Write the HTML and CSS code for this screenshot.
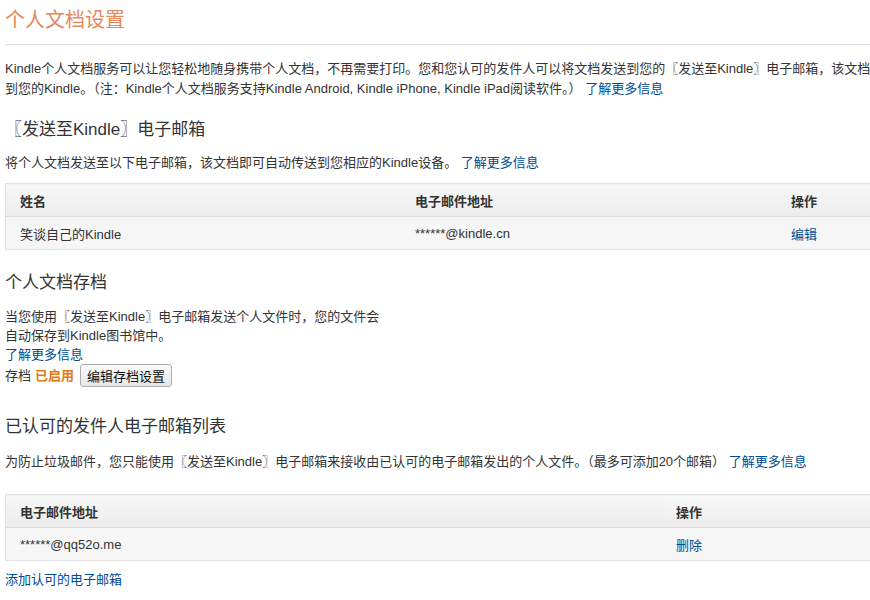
FILE: index.html
```html
<!DOCTYPE html>
<html lang="zh-CN">
<head>
    <meta charset="UTF-8">
    <title>个人文档设置</title>
    <link rel="stylesheet" href="styles.css">
</head>
<body>
    <div class="page">
        <!-- 标题 -->
        <h1 class="page-title">个人文档设置</h1>
        <hr class="divider">

        <p class="intro">
            Kindle个人文档服务可以让您轻松地随身携带个人文档，不再需要打印。您和您认可的发件人可以将文档发送到您的〖发送至Kindle〗电子邮箱，该文档会被发送<br>
            到您的Kindle。（注：Kindle个人文档服务支持Kindle Android, Kindle iPhone, Kindle iPad阅读软件。） <a href="#">了解更多信息</a>
        </p>

        <!-- 发送至Kindle 电子邮箱 -->
        <h2 class="section-title">〖发送至Kindle〗电子邮箱</h2>
        <p class="desc">将个人文档发送至以下电子邮箱，该文档即可自动传送到您相应的Kindle设备。 <a href="#">了解更多信息</a></p>

        <table class="data-table">
            <thead>
                <tr>
                    <th class="col-name">姓名</th>
                    <th class="col-mail">电子邮件地址</th>
                    <th>操作</th>
                </tr>
            </thead>
            <tbody>
                <tr>
                    <td>笑谈自己的Kindle</td>
                    <td>******@kindle.cn</td>
                    <td><a href="#">编辑</a></td>
                </tr>
            </tbody>
        </table>

        <!-- 个人文档存档 -->
        <h2 class="section-title archive-title">个人文档存档</h2>
        <div class="archive">
            <p>当您使用〖发送至Kindle〗电子邮箱发送个人文件时，您的文件会<br>自动保存到Kindle图书馆中。</p>
            <a href="#">了解更多信息</a>
            <div class="archive-status">
                存档 <strong class="enabled">已启用</strong>
                <button class="btn">编辑存档设置</button>
            </div>
        </div>

        <!-- 已认可的发件人 -->
        <h2 class="section-title approved-title">已认可的发件人电子邮箱列表</h2>
        <p class="desc approved-desc">为防止垃圾邮件，您只能使用〖发送至Kindle〗电子邮箱来接收由已认可的电子邮箱发出的个人文件。（最多可添加20个邮箱） <a href="#">了解更多信息</a></p>

        <table class="data-table approved-table">
            <thead>
                <tr>
                    <th class="col-approved">电子邮件地址</th>
                    <th>操作</th>
                </tr>
            </thead>
            <tbody>
                <tr>
                    <td>******@qq52o.me</td>
                    <td><a href="#">删除</a></td>
                </tr>
            </tbody>
        </table>

        <a href="#" class="add-link">添加认可的电子邮箱</a>
    </div>
</body>
</html>
```

FILE: styles.css
```css
body {
    margin: 0;
    padding: 0;
    background: #ffffff;
    color: #333333;
    font-family: 'Liberation Sans', 'Noto Sans CJK SC', sans-serif;
    font-size: 13px;
    overflow: hidden;
}

a {
    color: #004b91;
    text-decoration: none;
}

.page {
    width: 1000px;
    padding: 0 5px;
}

.page-title {
    margin: 0;
    padding-top: 6px;
    font-size: 20px;
    font-weight: normal;
    line-height: 28px;
    color: #e2885c;
}

.divider {
    margin: 10px 0 0;
    border: none;
    border-top: 1px solid #dddddd;
}

.intro {
    margin: 14px 0 0;
    line-height: 20px;
}

.section-title {
    margin: 19px 0 0;
    font-size: 17px;
    font-weight: normal;
    line-height: 24px;
    color: #333333;
}

.desc {
    margin: 11px 0 0;
    line-height: 20px;
}

.data-table {
    width: 100%;
    margin-top: 10px;
    border-collapse: collapse;
    border: 1px solid #e2e2e2;
}

.data-table th {
    height: 32px;
    padding: 0 14px;
    text-align: left;
    font-weight: bold;
    background: linear-gradient(#f7f7f7, #ececec);
    border-bottom: 1px solid #dddddd;
}

.data-table td {
    height: 32px;
    padding: 0 14px;
    background: #f6f6f6;
}

.col-name {
    width: 367px;
}

.col-mail {
    width: 348px;
}

.col-approved {
    width: 628px;
}

.archive-title {
    margin-top: 21px;
}

.archive {
    margin-top: 12px;
    line-height: 19px;
}

.archive p {
    margin: 0;
}

.archive-status {
    display: flex;
    align-items: center;
    gap: 4px;
}

.enabled {
    color: #e47911;
}

.btn {
    margin-left: 2px;
    padding: 1px 6px;
    font-family: inherit;
    font-size: 13px;
    color: #111111;
    background: linear-gradient(#fafafa, #e6e6e6);
    border: 1px solid #adadad;
    border-radius: 3px;
}

.approved-title {
    margin-top: 28px;
}

.approved-desc {
    margin-top: 13px;
}

.approved-table {
    margin-top: 22px;
}

.add-link {
    display: block;
    margin-top: 9px;
    line-height: 20px;
}
```
